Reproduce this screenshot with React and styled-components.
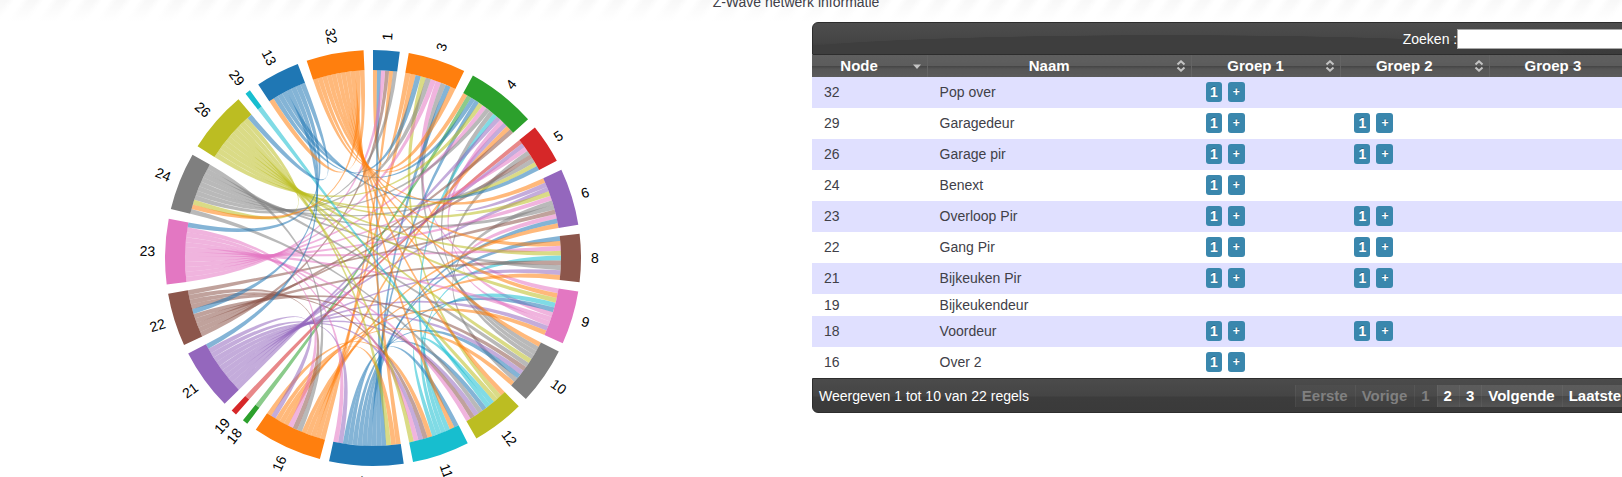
import React from "react";
import styled, { createGlobalStyle, css } from "styled-components";

const GlobalStyle = createGlobalStyle`
  * { box-sizing: border-box; }
  body {
    margin: 0;
    overflow: hidden;
    background: #fff;
    color: #404048;
    font: 14px/22px "Liberation Sans", Arial, sans-serif;
  }
`;

const Page = styled.div`
  height: 100vh;
  overflow: hidden;
`;

const TopBand = styled.header`
  height: 22px;
  padding-right: 30px;
  background:
    linear-gradient(rgba(255, 255, 255, 0), #fff),
    repeating-linear-gradient(125deg, #f8f8f8 0 6px, #fff 12px 18px, #f8f8f8 24px);
`;

const PageTitle = styled.h1`
  margin: 0;
  font-size: 14px;
  font-weight: 400;
  line-height: 4px;
  text-align: center;
`;

const Columns = styled.main`
  display: flex;
  align-items: flex-start;
`;

const ChartPane = styled.section`
  flex: 0 0 50%;
  padding-left: 125px;
`;

const ChartSvg = styled.svg`
  display: block;
  width: 496px;
  height: 496px;
`;

const NodeLabel = styled.text`
  font: 14px "Liberation Sans", Arial, sans-serif;
  fill: #000;
`;

const TablePane = styled.section`
  flex: 0 0 51%;
  padding-left: 1px;
`;

const Bar = styled.div`
  display: flex;
  align-items: center;
  color: #fff;
  border: 1px solid #2d2d2d;
  ${(p) =>
    p.$bottom
      ? css`
          height: 35px;
          padding: 0 9px 0 6px;
          justify-content: space-between;
          border-radius: 0 0 6px 6px;
          background: linear-gradient(#4b4b4b, #454545 50%, #3c3c3c 56%, #3a3a3a);
        `
      : css`
          height: 33px;
          padding: 0 4px;
          justify-content: flex-end;
          border-radius: 6px 6px 0 0;
          background:
            radial-gradient(ellipse 400px 19px at 43% 100%, #3e3e3e 98%, transparent 100%),
            linear-gradient(#4d4d4d, #444 64%, #3e3e3e 76%, #3b3b3b);
        `}
`;

const SearchInput = styled.input`
  width: 176px;
  height: 20px;
  padding: 0 4px;
  border: 1px solid #a9a9a9;
  border-radius: 0;
  background: #fff;
  font: inherit;
`;

const NodeTable = styled.table`
  width: 100%;
  table-layout: fixed;
  border-collapse: collapse;
`;

const Col = styled.col`
  width: ${(p) => p.$share}%;
`;

const HeadCell = styled.th`
  height: 22px;
  padding: 0;
  border-right: 1px solid #646464;
  background: linear-gradient(#5f5f5f, #5c5c5c 48%, #474747 52%, #565656 64%, #5b5b5b);
`;

const SortButton = styled.button`
  display: flex;
  align-items: center;
  width: 100%;
  height: 22px;
  padding: 0 5px 0 0;
  border: 0;
  background: none;
  color: #fff;
  font: bold 15px/22px "Liberation Sans", Arial, sans-serif;
`;

const HeadText = styled.span`
  flex: 1;
  padding-left: 6px;
  padding-right: 12px;
`;

const SortIcon = styled.svg`
  width: 10px;
  height: 12px;
  fill: none;
  stroke: #c4c4c4;
  stroke-width: 2;
`;

const Row = styled.tr`
  background: ${(p) => (p.$tinted ? "#e0e0ff" : "#fff")};
`;

const Cell = styled.td`
  height: ${(p) => (p.$short ? 22 : 31)}px;
  padding: 0 0 1px ${(p) => (p.$groups ? 14 : 12)}px;
  line-height: 20px;
  white-space: nowrap;
`;

const BadgeGroup = styled.div`
  display: flex;
  gap: 6px;
`;

const Badge = styled.button`
  width: ${(p) => (p.$add ? 17 : 16)}px;
  height: 20px;
  padding: 0;
  border: 0;
  border-radius: 3px;
  background: #3a87ad;
  color: #fff;
  font: bold ${(p) => (p.$add ? 12 : 14)}px/18px "Liberation Sans", Arial, sans-serif;
  text-shadow: 0 -1px 0 rgba(0, 0, 0, 0.25);
`;

const Pager = styled.nav`
  display: flex;
`;

const PageButton = styled.button`
  height: 22px;
  padding: 0 7px 0 6px;
  border: 0;
  border-left: 1px solid rgba(255, 255, 255, 0.05);
  background: linear-gradient(#5c5c5c, #585858 48%, #484848 52%, #545454);
  color: #fff;
  font: bold 15px/22px "Liberation Sans", Arial, sans-serif;

  &:disabled {
    background: rgba(255, 255, 255, 0.03);
    color: #808080;
  }
`;

/* Ring segments, clockwise from the top: angles in degrees and the
   neighbours in the order in which their ribbons leave the segment. */
const nodes = [
  { id: 1, from: 0, to: 7.4, links: [3, 17, 23, 22, 16, 24] },
  { id: 3, from: 9.9, to: 26, links: [1, 16, 13, 12, 24, 23, 9, 10, 17, 32] },
  { id: 4, from: 28.7, to: 48.2, links: [32, 18, 13, 17, 26, 23, 24, 10, 11, 21, 9, 6, 16, 22] },
  { id: 5, from: 51.1, to: 62.1, links: [19, 21, 23, 10, 22, 24, 26, 13] },
  { id: 6, from: 64.9, to: 80.8, links: [32, 4, 21, 26, 23, 10, 24, 22, 9, 17, 16] },
  { id: 8, from: 83.3, to: 96.7, links: [17, 32, 23, 26, 11, 22, 24, 21, 16] },
  { id: 9, from: 99.3, to: 114.2, links: [3, 32, 26, 11, 17, 4, 23, 6, 21, 16] },
  { id: 10, from: 116.7, to: 132.7, links: [32, 3, 4, 5, 26, 24, 22, 21, 17, 6, 16] },
  { id: 12, from: 135.5, to: 150.2, links: [32, 3, 26, 11, 29, 17, 24, 21, 22, 23] },
  { id: 11, from: 152.9, to: 168.9, links: [17, 32, 4, 8, 9, 12, 16, 22, 21, 23, 26] },
  { id: 17, from: 171.5, to: 192.2, links: [32, 16, 26, 1, 3, 4, 6, 8, 9, 10, 11, 12, 21, 23] },
  { id: 16, from: 194.8, to: 214.3, links: [1, 3, 4, 6, 8, 24, 22, 23, 17, 9, 10, 21, 11] },
  { id: 18, from: 217.2, to: 218.7, links: [4] },
  { id: 19, from: 221.2, to: 222.8, links: [5] },
  { id: 21, from: 225.5, to: 242.7, links: [4, 5, 6, 8, 9, 10, 12, 11, 17, 16, 13] },
  { id: 22, from: 245.3, to: 260.1, links: [1, 4, 5, 8, 10, 13, 12, 11, 16, 6] },
  { id: 23, from: 262.7, to: 280.9, links: [1, 3, 4, 5, 6, 8, 9, 12, 11, 16, 17, 13] },
  { id: 24, from: 283.6, to: 299.8, links: [12, 32, 26, 1, 3, 4, 5, 6, 8, 10, 16] },
  { id: 26, from: 302.5, to: 319.7, links: [4, 5, 6, 8, 9, 10, 12, 11, 17, 24, 13] },
  { id: 29, from: 322.2, to: 323.7, links: [12] },
  { id: 13, from: 326.5, to: 338.8, links: [32, 3, 4, 5, 21, 22, 23, 26] },
  { id: 32, from: 341.4, to: 357.4, links: [3, 4, 6, 8, 9, 10, 12, 11, 17, 24, 13] },
];

const palette = [
  "#1f77b4", "#ff7f0e", "#2ca02c", "#d62728", "#9467bd",
  "#8c564b", "#e377c2", "#7f7f7f", "#bcbd22", "#17becf",
];

const OUTER = 208;
const INNER = 188;
const LABEL = 218;

const point = (radius, degrees) => {
  const a = (degrees * Math.PI) / 180;
  return `${(radius * Math.sin(a)).toFixed(2)},${(-radius * Math.cos(a)).toFixed(2)}`;
};

const segmentPath = ({ from, to }) =>
  `M${point(OUTER, from)}A${OUTER},${OUTER} 0 0 1 ${point(OUTER, to)}` +
  `L${point(INNER, to)}A${INNER},${INNER} 0 0 0 ${point(INNER, from)}Z`;

const slot = (node, otherId) => {
  const step = (node.to - node.from) / node.links.length;
  const start = node.from + node.links.indexOf(otherId) * step;
  return [start, start + step];
};

/* Each edge bends towards a point near the middle of the ring; the two edges
   lean to opposite sides of it, so that a ribbon narrows on its way across. */
const PINCH = 0.8;

const ribbonPath = (a, b) => {
  const [a0, a1] = slot(a, b.id);
  const [b0, b1] = slot(b, a.id);
  const across = (a0 + a1) / 2 - 90;
  return (
    `M${point(INNER, a0)}A${INNER},${INNER} 0 0 1 ${point(INNER, a1)}` +
    `Q${point(PINCH, across)} ${point(INNER, b0)}A${INNER},${INNER} 0 0 1 ${point(INNER, b1)}` +
    `Q${point(-PINCH, across)} ${point(INNER, a0)}Z`
  );
};

const ribbons = nodes.flatMap((node, i) =>
  nodes
    .slice(0, i)
    .filter((other) => node.links.includes(other.id) && other.links.includes(node.id))
    .map((other) => ({
      key: `${node.id}-${other.id}`,
      d: ribbonPath(node, other),
      color: palette[i % 10],
    }))
);

function ChordChart() {
  return (
    <ChartSvg viewBox="-248 -236 496 496" role="img" aria-label="Z-Wave netwerk">
      {ribbons.map((r) => (
        <path key={r.key} d={r.d} fill={r.color} fillOpacity="0.55" />
      ))}
      {nodes.map((n, i) => {
        const mid = (n.from + n.to) / 2;
        const flip = mid > 180;
        return (
          <g key={n.id}>
            <path d={segmentPath(n)} fill={palette[i % 10]} />
            <NodeLabel
              dy="5"
              textAnchor={flip ? "end" : "start"}
              transform={`rotate(${mid - 90}) translate(${LABEL})${flip ? " rotate(180)" : ""}`}
            >
              {n.id}
            </NodeLabel>
          </g>
        );
      })}
    </ChartSvg>
  );
}

const columns = [
  { label: "Node", share: 14, sorted: true },
  { label: "Naam", share: 32 },
  { label: "Groep 1", share: 18 },
  { label: "Groep 2", share: 18 },
  { label: "Groep 3", share: 18 },
];

const rows = [
  { node: 32, name: "Pop over", groups: 1 },
  { node: 29, name: "Garagedeur", groups: 2 },
  { node: 26, name: "Garage pir", groups: 2 },
  { node: 24, name: "Benext", groups: 1 },
  { node: 23, name: "Overloop Pir", groups: 2 },
  { node: 22, name: "Gang Pir", groups: 2 },
  { node: 21, name: "Bijkeuken Pir", groups: 2 },
  { node: 19, name: "Bijkeukendeur", groups: 0 },
  { node: 18, name: "Voordeur", groups: 2 },
  { node: 16, name: "Over 2", groups: 1 },
];

const pages = [
  { label: "Eerste", disabled: true },
  { label: "Vorige", disabled: true },
  { label: "1", disabled: true },
  { label: "2" },
  { label: "3" },
  { label: "Volgende" },
  { label: "Laatste" },
];

function SortMark({ sorted }) {
  return (
    <SortIcon viewBox="0 0 10 12" aria-hidden="true">
      {sorted ? (
        <path d="M1 4.500H9L5 9Z" fill="#c4c4c4" stroke="none" />
      ) : (
        <path d="M1.500 4.500 5 1.300 8.500 4.500M1.500 7.500 5 10.700 8.500 7.500" />
      )}
    </SortIcon>
  );
}

function GroupCell({ filled, short }) {
  return (
    <Cell $groups $short={short}>
      {filled && (
        <BadgeGroup>
          <Badge type="button">1</Badge>
          <Badge type="button" $add>+</Badge>
        </BadgeGroup>
      )}
    </Cell>
  );
}

export default function App() {
  return (
    <Page>
      <GlobalStyle />
      <TopBand>
        <PageTitle>Z-Wave netwerk informatie</PageTitle>
      </TopBand>
      <Columns>
        <ChartPane>
          <ChordChart />
        </ChartPane>
        <TablePane>
          <Bar>
            <label htmlFor="search">Zoeken :</label>
            <SearchInput id="search" type="text" />
          </Bar>
          <NodeTable>
            <colgroup>
              {columns.map((c) => (
                <Col key={c.label} $share={c.share} />
              ))}
            </colgroup>
            <thead>
              <tr>
                {columns.map((c) => (
                  <HeadCell key={c.label} scope="col">
                    <SortButton type="button">
                      <HeadText>{c.label}</HeadText>
                      <SortMark sorted={c.sorted} />
                    </SortButton>
                  </HeadCell>
                ))}
              </tr>
            </thead>
            <tbody>
              {rows.map((r, i) => {
                const short = r.groups === 0;
                return (
                  <Row key={r.node} $tinted={i % 2 === 0}>
                    <Cell $short={short}>{r.node}</Cell>
                    <Cell $short={short}>{r.name}</Cell>
                    <GroupCell filled={r.groups > 0} short={short} />
                    <GroupCell filled={r.groups > 1} short={short} />
                    <GroupCell short={short} />
                  </Row>
                );
              })}
            </tbody>
          </NodeTable>
          <Bar $bottom>
            <span>Weergeven 1 tot 10 van 22 regels</span>
            <Pager aria-label="Pagina's">
              {pages.map((p) => (
                <PageButton key={p.label} type="button" disabled={p.disabled}>
                  {p.label}
                </PageButton>
              ))}
            </Pager>
          </Bar>
        </TablePane>
      </Columns>
    </Page>
  );
}
